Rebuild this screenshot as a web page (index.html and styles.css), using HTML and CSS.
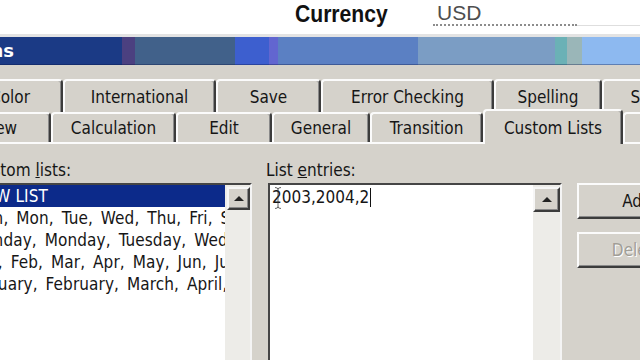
FILE: index.html
```html
<!DOCTYPE html>
<html lang="en">
<head>
<meta charset="utf-8">
<title>Options - Custom Lists</title>
<link rel="stylesheet" href="styles.css">
</head>
<body>
<div class="top">
  <span class="cur-label"><span class="cur-text">Currency</span></span>
  <div class="cur-field">
    <span class="cur-val">USD</span>
    <span class="cur-rest"></span>
  </div>
</div>
<div class="title"><span class="title-text">Options</span></div>
<div class="tabs">
  <div class="tabrow row1">
    <div class="tab t-color">Color</div>
    <div class="tab t-intl">International</div>
    <div class="tab t-save">Save</div>
    <div class="tab t-err">Error Checking</div>
    <div class="tab t-spell">Spelling</div>
    <div class="tab t-sec">Security</div>
  </div>
  <div class="tabrow row2">
    <div class="tab t-view">View</div>
    <div class="tab t-calc">Calculation</div>
    <div class="tab t-edit">Edit</div>
    <div class="tab t-gen">General</div>
    <div class="tab t-trans">Transition</div>
    <div class="tab t-custom active">Custom Lists</div>
    <div class="tab t-chart">Chart</div>
  </div>
</div>
<div class="panel">
  <div class="col col-lists">
    <div class="label">Custom <u>l</u>ists:</div>
    <div class="listbox lb-left">
      <div class="items">
        <div class="item sel">NEW LIST</div>
        <div class="item">Sun, Mon, Tue, Wed, Thu, Fri, Sat</div>
        <div class="item">Sunday, Monday, Tuesday, Wednesday, Thursday</div>
        <div class="item">Jan, Feb, Mar, Apr, May, Jun, Jul, Aug</div>
        <div class="item">January, February, March, April, May</div>
      </div>
      <div class="vscroll vs-left"><div class="upbtn"><span class="arrow"></span></div></div>
    </div>
  </div>
  <div class="col col-entries">
    <div class="label">List <u>e</u>ntries:</div>
    <div class="listbox lb-right">
      <div class="entry">2003,2004,2<span class="caret"></span></div>
      <div class="vscroll vs-right"><div class="upbtn"><span class="arrow"></span></div></div>
      <svg class="ibeam" width="8" height="24" viewBox="0 0 8 24"><path d="M1 1.5 Q4 1.5 4 3.5 Q4 1.5 7 1.5 M4 3.5 V20.5 M1 22.5 Q4 22.5 4 20.5 Q4 22.5 7 22.5" fill="none" stroke="#333" stroke-width="1"/></svg>
    </div>
  </div>
  <div class="col col-btns">
    <div class="btn">Add</div>
    <div class="btn disabled">Delete</div>
  </div>
</div>
</body>
</html>
```
FILE: styles.css
```css
html, body {
  margin: 0;
  padding: 0;
}
body {
  width: 640px;
  height: 360px;
  overflow: hidden;
  background: #d5d2cb;
  font-family: "DejaVu Sans Condensed", "DejaVu Sans", sans-serif;
  font-stretch: condensed;
  color: #161616;
}

/* top strip with currency field */
.top {
  height: 37px;
  box-sizing: border-box;
  background: #fff;
  border-bottom: 3px solid #e3e3e3;
  display: flex;
  align-items: flex-start;
  padding-left: 295px;
  font-family: "Liberation Sans", Arial, sans-serif;
  font-stretch: normal;
}
.cur-label {
  width: 138px;
  font-weight: bold;
  font-size: 24px;
  line-height: 26px;
  margin-top: 1px;
  color: #111;
  white-space: nowrap;
}
.cur-text {
  display: inline-block;
  transform: scaleX(0.88);
  transform-origin: left center;
}
.cur-field {
  flex: 1;
  display: flex;
}
.cur-val {
  width: 144px;
  height: 26px;
  box-sizing: border-box;
  padding-left: 4px;
  padding-top: 2px;
  border-bottom: 2px dotted #8c8c8c;
  font-size: 21px;
  line-height: 22px;
  color: #4e4e4e;
}
.cur-rest {
  flex: 1;
  height: 25px;
  border-bottom: 1px solid #dedede;
}

/* title bar */
.title {
  height: 28px;
  display: flex;
  align-items: center;
  overflow: hidden;
  background: linear-gradient(to right,
    #1b3a85 0 122px, #4b4080 122px 135px, #41618a 135px 235px,
    #3d5fcf 235px 269px, #6266d0 269px 278px, #5b80c3 278px 418px,
    #7b9dc4 418px 555px, #6bb1b6 555px 567px, #9ab6b8 567px 582px,
    #8db9f0 582px 640px);
  box-shadow: inset 0 -1px rgba(10, 20, 70, 0.35);
}
.title-text {
  display: inline-block;
  width: 100px;
  margin-left: -86px;
  text-align: right;
  color: #fff;
  font-family: "DejaVu Sans", sans-serif;
  font-stretch: normal;
  font-weight: bold;
  font-size: 18px;
  line-height: 28px;
}

/* tabs */
.tabs {
  margin-top: 14px;
}
.tabrow {
  display: flex;
  white-space: nowrap;
}
.row1 { height: 33px; }
.row2 { height: 30px; }
.tab {
  flex: none;
  box-sizing: border-box;
  height: 100%;
  display: flex;
  align-items: center;
  justify-content: center;
  background: #d5d2cb;
  border-top: 2px solid #fbfbfb;
  border-left: 2px solid #fbfbfb;
  border-right: 2px solid #3c3c3c;
  border-radius: 4px 4px 0 0;
  box-shadow: inset -1px 0 #8a8a8a;
  font-size: 17px;
}
.t-color { width: 106px; margin-left: -43px; }
.t-intl { width: 153px; }
.t-save { width: 105px; }
.t-err { width: 173px; }
.t-spell { width: 108px; }
.t-sec { width: 120px; }
.t-view { width: 104px; margin-left: -53px; }
.t-calc { width: 125px; }
.t-edit { width: 96px; }
.t-gen { width: 98px; }
.t-trans { width: 113px; }
.t-custom { width: 140px; }
.t-chart { width: 100px; }
.tab.active {
  height: 35px;
  margin-top: -3px;
  position: relative;
  z-index: 1;
}

/* dialog page */
.panel {
  border-top: 2px solid #fbfbfb;
  display: flex;
  padding-top: 16px;
  font-size: 17px;
}
.col {
  flex: none;
}
.label {
  height: 20px;
  line-height: 20px;
  margin-bottom: 3px;
  white-space: nowrap;
}
.col-lists {
  width: 282px;
  margin-left: -30px;
}
.col-lists .label { padding-left: 2px; }
.col-entries {
  width: 296px;
  margin-left: 14px;
}
.col-btns {
  margin-left: 15px;
  padding-top: 23px;
  display: flex;
  flex-direction: column;
  gap: 13px;
}

.listbox {
  box-sizing: border-box;
  height: 220px;
  background: #fff;
  border-top: 2px solid #454545;
  border-left: 2px solid #454545;
  border-right: 2px solid #f4f4f4;
  display: flex;
  position: relative;
}
.lb-left { width: 282px; }
.lb-right { width: 294px; margin-left: 2px; }

.items {
  flex: 1;
  overflow: hidden;
}
.item {
  height: 22px;
  line-height: 22px;
  padding-left: 2px;
  white-space: nowrap;
  word-spacing: 3px;
  letter-spacing: 0.1px;
  color: #161616;
}
.item.sel {
  background: #0c2a8a;
  color: #fff;
  word-spacing: 0;
}

.entry {
  flex: 1;
  padding: 1px 2px;
  line-height: 22px;
  white-space: nowrap;
  color: #161616;
}
.caret {
  display: inline-block;
  width: 1px;
  height: 19px;
  background: #111;
  vertical-align: -4px;
  margin-left: 1px;
}
.ibeam {
  position: absolute;
  left: 4px;
  top: 1px;
  opacity: 0.75;
}

.vscroll {
  flex: none;
  background: #edece8;
}
.vs-left { width: 25px; padding: 2px 0 0 2px; box-sizing: border-box; }
.vs-right { width: 27px; padding-top: 2px; box-sizing: border-box; }
.upbtn {
  box-sizing: border-box;
  height: 23px;
  background: #d5d2cb;
  border-top: 2px solid #f6f6f6;
  border-left: 2px solid #f6f6f6;
  border-right: 2px solid #3c3c3c;
  border-bottom: 2px solid #3c3c3c;
  box-shadow: inset -1px -1px #8a8a8a;
  display: flex;
  align-items: center;
  justify-content: center;
}
.vs-right .upbtn { height: 25px; }
.arrow {
  width: 0;
  height: 0;
  border-left: 5px solid transparent;
  border-right: 5px solid transparent;
  border-bottom: 5px solid #222;
}

.btn {
  box-sizing: border-box;
  width: 120px;
  height: 36px;
  background: #d5d2cb;
  border-top: 2px solid #fbfbfb;
  border-left: 2px solid #fbfbfb;
  border-right: 2px solid #3c3c3c;
  border-bottom: 2px solid #3c3c3c;
  box-shadow: inset -1px -1px #8a8a8a;
  display: flex;
  align-items: center;
  justify-content: center;
  font-size: 17px;
  color: #161616;
}
.btn.disabled {
  color: #a19e97;
  text-shadow: 1px 1px #fff;
}
```
